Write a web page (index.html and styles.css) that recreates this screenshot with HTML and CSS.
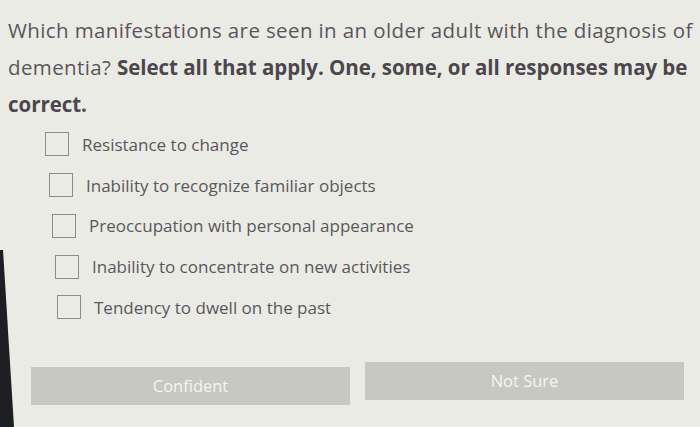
FILE: index.html
```html
<!DOCTYPE html>
<html>
<head>
<meta charset="utf-8">
<link rel="stylesheet" href="styles.css">
</head>
<body>
<div class="page">
  <p class="question"><span>Which manifestations are seen in an older adult with the diagnosis of</span> <span>dementia?</span> <strong>Select all that apply. One, some, or all responses may be</strong> <strong>correct.</strong></p>
  <ul class="options">
    <li class="option o1"><span class="box"></span><span class="label">Resistance to change</span></li>
    <li class="option o2"><span class="box"></span><span class="label">Inability to recognize familiar objects</span></li>
    <li class="option o3"><span class="box"></span><span class="label">Preoccupation with personal appearance</span></li>
    <li class="option o4"><span class="box"></span><span class="label">Inability to concentrate on new activities</span></li>
    <li class="option o5"><span class="box"></span><span class="label">Tendency to dwell on the past</span></li>
  </ul>
  <div class="buttons">
    <button class="btn btn-left">Confident</button>
    <button class="btn btn-right">Not Sure</button>
  </div>
  <div class="edge"></div>
</div>
</body>
</html>
```
FILE: styles.css
```css
html, body {
  margin: 0;
  padding: 0;
  background: #ebebe6;
}
.page {
  position: relative;
  width: 700px;
  height: 427px;
  overflow: hidden;
  font-family: "Open Sans", "Liberation Sans", sans-serif;
  color: #5a5659;
  box-sizing: border-box;
  padding: 12px 0 0 8px;
}
.question {
  margin: 0;
  font-size: 20.5px;
  line-height: 37px;
  letter-spacing: 0.38px;
  width: 692px;
}
.question strong {
  font-weight: 700;
  color: #4b474c;
  letter-spacing: -0.05px;
}
.options {
  list-style: none;
  margin: 1px 0 0 0;
  padding: 0;
}
.option {
  display: flex;
  align-items: center;
  height: 40.75px;
  font-size: 17px;
  color: #5a575b;
}
.box {
  width: 24px;
  height: 24px;
  border: 1.5px solid #8d8b8c;
  box-sizing: border-box;
  margin-right: 13px;
  flex: none;
}
.o1 { margin-left: 37px; }
.o2 { margin-left: 41px; }
.o3 { margin-left: 44px; }
.o4 { margin-left: 47px; }
.o5 { margin-left: 49px; }
.buttons {
  display: flex;
  gap: 15px;
  margin: 34px 0 0 23px;
  align-items: flex-start;
}
.btn {
  border: none;
  background: #c8c8c2;
  color: #f5f5f2;
  font-family: "Open Sans", "Liberation Sans", sans-serif;
  font-size: 16.5px;
  width: 319px;
  height: 38px;
  padding: 0;
}
.btn-left { margin-top: 5px; }
.edge {
  position: absolute;
  left: 0;
  top: 250px;
  width: 16px;
  height: 177px;
  background: #1d1d24;
  clip-path: polygon(0 0, 3px 0, 14px 100%, 0 100%);
}
```
